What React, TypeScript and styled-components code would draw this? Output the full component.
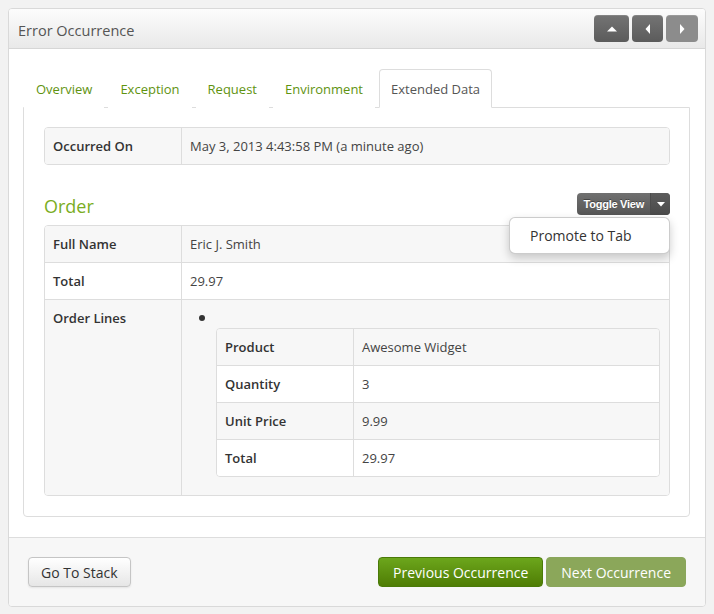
import React from "react";
import styled, { createGlobalStyle } from "styled-components";

const Global = createGlobalStyle`
  html, body { margin: 0; padding: 0; }
  body {
    background: #f2f2f2;
    font-family: "Open Sans", "Noto Sans", sans-serif;
    color: #333;
  }
`;

const Page = styled.div`
  padding: 8px;
  width: 698px;
`;

const Panel = styled.div`
  background: #fff;
  border: 1px solid #d9d9d9;
  border-radius: 4px;
  overflow: hidden;
`;

const Header = styled.div`
  height: 39px;
  display: flex;
  align-items: center;
  justify-content: space-between;
  padding: 0 7px 0 9px;
  background: linear-gradient(#fcfcfc, #e9e9e9);
  border-bottom: 1px solid #d6d6d6;
`;

const Title = styled.div`
  font-size: 14.5px;
  color: #555;
  padding-top: 3px;
`;

const NavGroup = styled.div`
  display: flex;
  gap: 3px;
`;

const NavButton = styled.div<{ $w: number; $disabled?: boolean }>`
  width: ${(p) => p.$w}px;
  height: 27px;
  border-radius: 4px;
  display: flex;
  align-items: center;
  justify-content: center;
  background: ${(p) =>
    p.$disabled ? "#8c8c8c" : "linear-gradient(#747474, #5b5b5b)"};
  box-shadow: inset 0 1px 0 rgba(255, 255, 255, 0.12);
`;

const Body = styled.div`
  padding: 20px 15px 20px 14px;
`;

const Tabs = styled.div`
  display: flex;
  gap: 4px;
  padding-left: 1px;
  margin-bottom: -1px;
  position: relative;
  z-index: 1;
`;

const Tab = styled.div<{ $active?: boolean }>`
  height: 37px;
  padding: 0 11px;
  display: flex;
  align-items: center;
  font-size: 13px;
  color: ${(p) => (p.$active ? "#555" : "#5f9310")};
  background: #fff;
  border: 1px solid ${(p) => (p.$active ? "#ddd" : "transparent")};
  border-bottom-color: ${(p) => (p.$active ? "#fff" : "transparent")};
  border-radius: 4px 4px 0 0;
`;

const TabPane = styled.div`
  border: 1px solid #ddd;
  border-radius: 0 0 4px 4px;
  padding: 19px 19px 20px 20px;
`;

const Table = styled.div`
  border: 1px solid #ddd;
  border-radius: 4px;
  overflow: hidden;
`;

const Row = styled.div<{ $shade?: boolean }>`
  display: grid;
  grid-template-columns: 137px 1fr;
  background: ${(p) => (p.$shade ? "#f7f7f7" : "#fff")};
  & + & {
    border-top: 1px solid #ddd;
  }
`;

const Label = styled.div`
  padding: 8px 8px;
  font-size: 13px;
  line-height: 20px;
  font-weight: 600;
  color: #333;
  border-right: 1px solid #ddd;
`;

const Value = styled.div`
  padding: 8px 9px 8px 8px;
  font-size: 13px;
  line-height: 20px;
  color: #444;
`;

const SectionHead = styled.div`
  margin-top: 28px;
  margin-bottom: 10px;
  height: 22px;
  display: flex;
  align-items: flex-end;
  justify-content: space-between;
  position: relative;
`;

const SectionTitle = styled.div`
  font-size: 18px;
  line-height: 22px;
  color: #7aad22;
  margin-bottom: -2px;
`;

const Split = styled.div`
  display: flex;
  height: 22px;
  border-radius: 4px;
  overflow: hidden;
  background: linear-gradient(#707070, #565656);
`;

const SplitMain = styled.div`
  padding: 0 6px 0 7px;
  display: flex;
  align-items: center;
  font-family: "Liberation Sans", Arial, sans-serif;
  font-size: 11px;
  font-weight: bold;
  letter-spacing: -0.25px;
  color: #fff;
  text-shadow: 0 -1px 0 rgba(0, 0, 0, 0.35);
`;

const SplitCaret = styled.div`
  width: 19px;
  display: flex;
  align-items: center;
  justify-content: center;
  border-left: 1px solid #4c4c4c;
  background: linear-gradient(#5c5c5c, #4a4a4a);
`;

const Menu = styled.div`
  position: absolute;
  right: 0;
  top: 24px;
  width: 161px;
  height: 37px;
  background: #fff;
  border: 1px solid rgba(0, 0, 0, 0.2);
  border-radius: 6px;
  box-shadow: 0 4px 10px rgba(0, 0, 0, 0.2);
  display: flex;
  align-items: center;
  padding-left: 20px;
  box-sizing: border-box;
  font-size: 14px;
  color: #333;
  z-index: 5;
`;

const ListCell = styled.div`
  padding: 8px 9px 18px 8px;
`;

const Bullet = styled.div`
  height: 20px;
  position: relative;
  &::before {
    content: "";
    position: absolute;
    left: 9px;
    top: 7px;
    width: 6px;
    height: 6px;
    border-radius: 50%;
    background: #333;
  }
`;

const Nested = styled.div`
  margin-left: 26px;
`;

const Footer = styled.div`
  border-top: 1px solid #ddd;
  background: #f7f7f7;
  padding: 19px;
  display: flex;
  justify-content: space-between;
  align-items: center;
`;

const Btn = styled.div<{ $variant: "default" | "primary" | "disabled" }>`
  height: 30px;
  box-sizing: border-box;
  padding: 0 ${(p) => (p.$variant === "default" ? 12 : 14)}px;
  display: flex;
  align-items: center;
  font-size: 14px;
  border-radius: 4px;
  border: 1px solid
    ${(p) =>
      p.$variant === "default"
        ? "#c5c5c5"
        : p.$variant === "primary"
        ? "#4a7a08"
        : "#8aa65c"};
  color: ${(p) => (p.$variant === "default" ? "#333" : "#fff")};
  background: ${(p) =>
    p.$variant === "default"
      ? "linear-gradient(#ffffff, #e6e6e6)"
      : p.$variant === "primary"
      ? "linear-gradient(#6ca61c, #4f7d04)"
      : "#8ba75a"};
  box-shadow: ${(p) =>
    p.$variant === "default"
      ? "inset 0 1px 0 rgba(255,255,255,.2), 0 1px 2px rgba(0,0,0,.08)"
      : "none"};
`;

const BtnGroup = styled.div`
  display: flex;
  gap: 3px;
`;

const Up = () => (
  <svg width="10" height="6" viewBox="0 0 10 6">
    <path d="M0 5.5 L5 0.5 L10 5.5 Z" fill="#fff" />
  </svg>
);
const Left = () => (
  <svg width="6" height="10" viewBox="0 0 6 10">
    <path d="M5 0 L0.5 5 L5 10 Z" fill="#fff" />
  </svg>
);
const Right = () => (
  <svg width="6" height="10" viewBox="0 0 6 10">
    <path d="M1 0 L5.5 5 L1 10 Z" fill="#fff" />
  </svg>
);
const Down = () => (
  <svg width="8" height="5" viewBox="0 0 8 5">
    <path d="M0 0 L8 0 L4 4.5 Z" fill="#fff" />
  </svg>
);

export default function App() {
  return (
    <>
      <Global />
      <Page>
        <Panel>
          <Header>
            <Title>Error Occurrence</Title>
            <NavGroup>
              <NavButton $w={35}>
                <Up />
              </NavButton>
              <NavButton $w={31}>
                <Left />
              </NavButton>
              <NavButton $w={32} $disabled>
                <Right />
              </NavButton>
            </NavGroup>
          </Header>
          <Body>
            <Tabs>
              <Tab>Overview</Tab>
              <Tab>Exception</Tab>
              <Tab>Request</Tab>
              <Tab>Environment</Tab>
              <Tab $active>Extended Data</Tab>
            </Tabs>
            <TabPane>
              <Table>
                <Row $shade>
                  <Label>Occurred On</Label>
                  <Value>May 3, 2013 4:43:58 PM (a minute ago)</Value>
                </Row>
              </Table>
              <SectionHead>
                <SectionTitle>Order</SectionTitle>
                <Split>
                  <SplitMain>Toggle View</SplitMain>
                  <SplitCaret>
                    <Down />
                  </SplitCaret>
                </Split>
                <Menu>Promote to Tab</Menu>
              </SectionHead>
              <Table>
                <Row $shade>
                  <Label>Full Name</Label>
                  <Value>Eric J. Smith</Value>
                </Row>
                <Row>
                  <Label>Total</Label>
                  <Value>29.97</Value>
                </Row>
                <Row $shade>
                  <Label>Order Lines</Label>
                  <ListCell>
                    <Bullet />
                    <Nested>
                      <Table>
                        <Row $shade>
                          <Label>Product</Label>
                          <Value>Awesome Widget</Value>
                        </Row>
                        <Row>
                          <Label>Quantity</Label>
                          <Value>3</Value>
                        </Row>
                        <Row $shade>
                          <Label>Unit Price</Label>
                          <Value>9.99</Value>
                        </Row>
                        <Row>
                          <Label>Total</Label>
                          <Value>29.97</Value>
                        </Row>
                      </Table>
                    </Nested>
                  </ListCell>
                </Row>
              </Table>
            </TabPane>
          </Body>
          <Footer>
            <Btn $variant="default">Go To Stack</Btn>
            <BtnGroup>
              <Btn $variant="primary">Previous Occurrence</Btn>
              <Btn $variant="disabled">Next Occurrence</Btn>
            </BtnGroup>
          </Footer>
        </Panel>
      </Page>
    </>
  );
}
